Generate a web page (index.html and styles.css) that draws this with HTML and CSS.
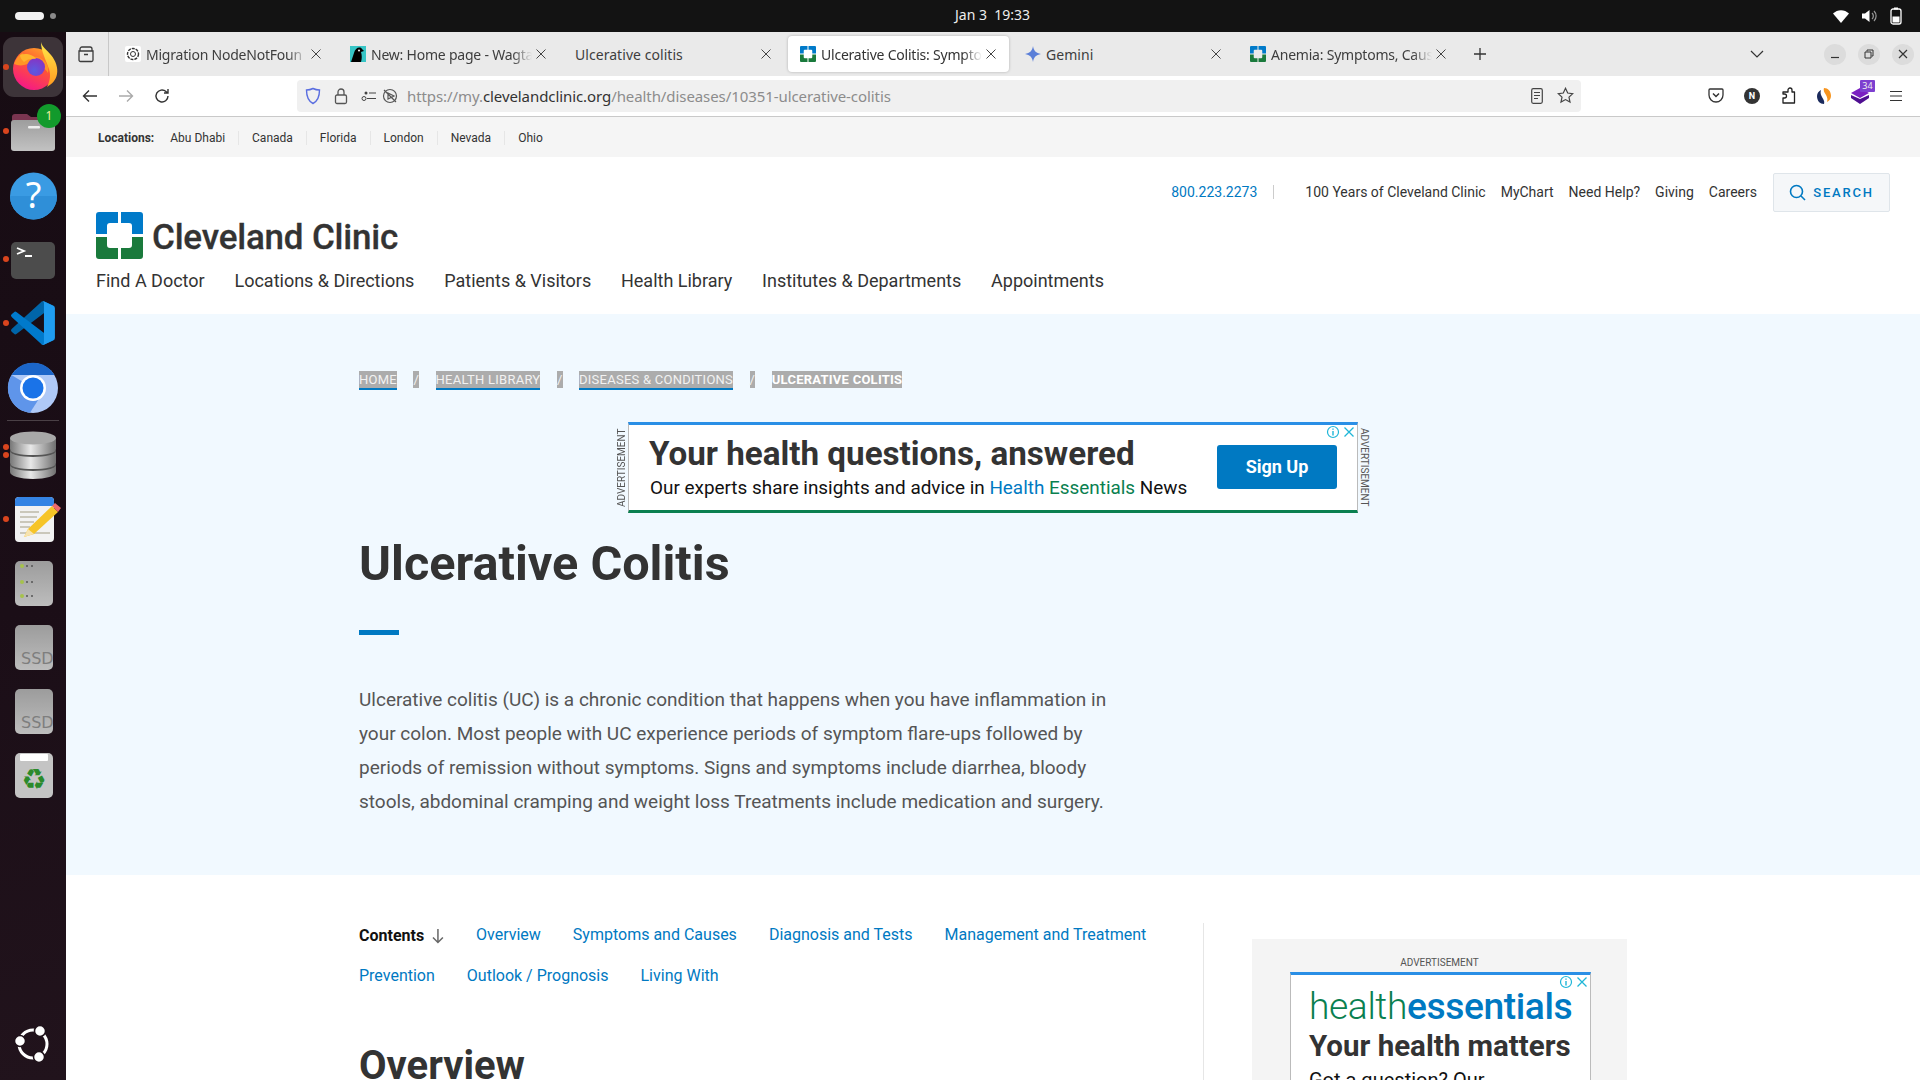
FILE: index.html
```html
<!DOCTYPE html>
<html lang="en">
<head>
<meta charset="utf-8">
<title>Ulcerative Colitis: Symptoms</title>
<link rel="stylesheet" href="styles.css">
</head>
<body>
<svg class="defs" width="0" height="0"><defs>
  <g id="cc"><path id="ccq" d="M3 0H22V11H14a3 3 0 0 0-3 3V22H0V3a3 3 0 0 1 3-3z" fill="#007ac9"/><use href="#ccq" transform="translate(47 0) scale(-1 1)"/><path id="ccg" d="M3 47H22V36H14a3 3 0 0 1-3-3V25H0V44a3 3 0 0 0 3 3z" fill="#1a7a3c"/><use href="#ccg" transform="translate(47 0) scale(-1 1)"/></g>
  <g id="tabx"><path d="M2.500 2.500l9 9M11.500 2.500l-9 9" fill="none" stroke="#444" stroke-width="1"/></g>
  <linearGradient id="gr" x1="0" y1="0" x2="0" y2="1"><stop offset="0" stop-color="#9c9c9c"/><stop offset="1" stop-color="#bdbdbd"/></linearGradient>
</defs></svg>
<div class="desktop">
  <header class="topbar">
    <div class="activities"><span class="pill"></span><span class="pill-dot"></span></div>
    <div class="clock">Jan 3&nbsp;&nbsp;19:33</div>
    <div class="tray">
      <svg width="18" height="16" viewBox="0 0 18 16"><path d="M1 5.500C5.500 1 12.500 1 17 5.500L9 15z" fill="#fff"/></svg>
      <svg width="18" height="16" viewBox="0 0 18 16"><path d="M1 5.500h3L8.500 2v12L4 10.500H1z" fill="#fff"/><path d="M11 5a4 4 0 0 1 0 6M13 3a7 7 0 0 1 0 10" fill="none" stroke="#999" stroke-width="1.200"/></svg>
      <svg width="12" height="18" viewBox="0 0 12 18"><rect x="4" y="0.500" width="4" height="2" fill="#fff"/><rect x="1" y="2" width="10" height="15" rx="2" fill="none" stroke="#fff" stroke-width="1.300"/><rect x="2.500" y="9.500" width="7" height="6" fill="#fff"/></svg>
    </div>
  </header>
  <div class="workspace">
    <nav class="dock">
      <div class="dock-item active"><i class="run"></i>
        <svg width="64" height="64" viewBox="0 0 64 64"><defs><linearGradient id="ff1" x1="0.800" y1="0" x2="0.300" y2="1"><stop offset="0" stop-color="#ffa526"/><stop offset=".45" stop-color="#ff5436"/><stop offset="1" stop-color="#f5168a"/></linearGradient><linearGradient id="ff2" x1="0.500" y1="0" x2="0.500" y2="1"><stop offset="0" stop-color="#ffe94a"/><stop offset="1" stop-color="#ff9a1f"/></linearGradient><radialGradient id="ff3" cx=".4" cy=".7" r=".8"><stop offset="0" stop-color="#5b5be0"/><stop offset="1" stop-color="#8c2fc0"/></radialGradient></defs><circle cx="33" cy="34" r="21" fill="url(#ff1)"/><path d="M40 7c1 5 6 8 10 13 5 6 7 13 6 19-1 6-5 10-10 13 3-6 4-12 2-18C45 25 40 16 40 7z" fill="url(#ff2)"/><path d="M13 29c2-6 5-9 9-11-1 3 0 4 2 5 5-2 12-2 17 1 5 3 7 8 6 14-5-8-14-11-24-8-4 1-7 0-10-1z" fill="#ff9426"/><circle cx="35" cy="32" r="9" fill="url(#ff3)"/><path d="M19 20c5-2 13-1 16 4-4-1-9 0-12 3-2-2-4-4-4-7z" fill="#ffb52e"/></svg>
      </div>
      <div class="dock-item"><i class="run"></i>
        <svg width="64" height="64" viewBox="0 0 64 64"><defs><linearGradient id="fo" x1="0" y1="0" x2="0" y2="1"><stop offset="0" stop-color="#9d9d9d"/><stop offset="1" stop-color="#c2c2c2"/></linearGradient></defs><path d="M11 28v-10a3 3 0 0 1 3-3h12l4 3h18v10z" fill="#7a3550"/><rect x="10" y="21" width="44" height="31" rx="3" fill="url(#fo)"/><rect x="27" y="27" width="12" height="2.500" rx="1" fill="#eee"/></svg>
        <span class="badge">1</span>
      </div>
      <div class="dock-item">
        <svg width="64" height="64" viewBox="0 0 64 64"><circle cx="32.500" cy="33" r="23.500" fill="#3a9be3"/><path d="M9 33a23.500 23.500 0 0 0 47 0z" fill="#2f8fd8"/><text x="32.500" y="45" class="help-mark">?</text></svg>
      </div>
      <div class="dock-item"><i class="run"></i>
        <svg width="64" height="64" viewBox="0 0 64 64"><rect x="10" y="15" width="44" height="37" rx="5" fill="#4c4c4c"/><path d="M16 21l7 3-7 3M24 29h7" fill="none" stroke="#fff" stroke-width="1.800"/></svg>
      </div>
      <div class="dock-item"><i class="run"></i>
        <svg width="64" height="64" viewBox="-23 -21 146 142"><path d="M96.460 10.800L75.860.87a6.230 6.230 0 0 0-7.110 1.210L1.300 63.580a4.170 4.170 0 0 0 0 6.160l5.510 5.010a4.170 4.170 0 0 0 5.320.24L93.340 13.370a4.130 4.130 0 0 1 6.660 3.290v-.24a6.250 6.250 0 0 0-3.540-5.620z" fill="#0065a9"/><path d="M96.460 89.200L75.860 99.130a6.230 6.230 0 0 1-7.110-1.210L1.300 36.420a4.170 4.170 0 0 1 0-6.160l5.510-5.010a4.170 4.170 0 0 1 5.320-.24l81.210 61.620a4.130 4.130 0 0 0 6.660-3.290v.24a6.250 6.250 0 0 1-3.540 5.620z" fill="#007acc"/><path d="M75.860 99.130a6.230 6.230 0 0 1-7.110-1.210c2.310 2.310 6.250.67 6.250-2.590V4.670c0-3.260-3.940-4.890-6.250-2.590a6.230 6.230 0 0 1 7.110-1.210l20.600 9.910A6.250 6.250 0 0 1 100 16.400v67.200a6.250 6.250 0 0 1-3.540 5.620z" fill="#1f9cf0"/></svg>
      </div>
      <div class="dock-item">
        <svg width="64" height="64" viewBox="0 0 64 64"><circle cx="32" cy="33" r="25" fill="#afc9f7"/><path d="M10.500 20a25 25 0 0 1 43 0H32z" fill="#1c66c9"/><path d="M10.500 20a25 25 0 0 0 18.500 37.800L41 39 32 33z" fill="#5f95ea"/><circle cx="32" cy="33" r="13" fill="#fff"/><circle cx="32" cy="33" r="10.500" fill="#1a73e8"/></svg>
      </div>
      <div class="dock-sep"></div>
      <div class="dock-item"><i class="run two"></i>
        <svg width="64" height="64" viewBox="0 0 64 64"><defs><linearGradient id="db" x1="0" y1="0" x2="1" y2="0"><stop offset="0" stop-color="#777"/><stop offset=".45" stop-color="#e8e8e8"/><stop offset="1" stop-color="#6f6f6f"/></linearGradient></defs><path d="M9 42h46v7c0 4-10 7-23 7S9 53 9 49z" fill="url(#db)"/><ellipse cx="32" cy="42" rx="23" ry="6" fill="#555"/><path d="M9 28h46v12c0 4-10 6-23 6S9 44 9 40z" fill="url(#db)"/><ellipse cx="32" cy="28" rx="23" ry="6" fill="#555"/><path d="M9 15h46v11c0 4-10 6-23 6S9 30 9 26z" fill="url(#db)"/><ellipse cx="32" cy="15" rx="23" ry="6.500" fill="#a8a8a8"/></svg>
      </div>
      <div class="dock-item"><i class="run"></i>
        <svg width="64" height="64" viewBox="0 0 64 64"><rect x="14" y="10" width="39" height="45" rx="4" fill="#f2f2f2"/><path d="M14 19v-5a4 4 0 0 1 4-4h31a4 4 0 0 1 4 4v5z" fill="#3584e4"/><path d="M19 25h19M19 30h17M19 35h14M19 40h10M19 46h30" stroke="#bdb9a8" stroke-width="1.500"/><path d="M23 50l4-8 24-23 6 6-24 22z" fill="#f6c427"/><path d="M51 19l3-3 6 5-3 4z" fill="#ed6a6a"/><path d="M23 50l4-8 6 5z" fill="#f7e3b0"/></svg>
      </div>
      <div class="dock-item">
        <svg width="64" height="64" viewBox="0 0 64 64"><rect x="14" y="10" width="38" height="45" rx="5" fill="url(#gr)"/><g fill="#555"><circle cx="21" cy="15" r="2" fill="#a6c24c"/><circle cx="26" cy="15" r="1"/><circle cx="31" cy="15" r="1"/><circle cx="21" cy="31" r="2" fill="#a6c24c"/><circle cx="26" cy="31" r="1"/><circle cx="31" cy="31" r="1"/><circle cx="21" cy="45" r="2" fill="#a6c24c"/><circle cx="26" cy="45" r="1"/><circle cx="31" cy="45" r="1"/></g></svg>
      </div>
      <div class="dock-item">
        <svg width="64" height="64" viewBox="0 0 64 64"><rect x="14" y="10" width="38" height="45" rx="5" fill="url(#gr)"/><text x="20" y="49" class="ssd">SSD</text></svg>
      </div>
      <div class="dock-item">
        <svg width="64" height="64" viewBox="0 0 64 64"><rect x="14" y="10" width="38" height="45" rx="5" fill="url(#gr)"/><text x="20" y="49" class="ssd">SSD</text></svg>
      </div>
      <div class="dock-item">
        <svg width="64" height="64" viewBox="0 0 64 64"><rect x="14" y="10" width="38" height="45" rx="5" fill="#c4c4c4"/><rect x="19" y="11" width="28" height="7" rx="1" fill="#fff"/><text x="33" y="46" class="recycle">♻</text></svg>
      </div>
      <div class="dock-ubuntu">
        <svg width="40" height="40" viewBox="0 0 40 40"><circle cx="20" cy="20" r="14" fill="none" stroke="#fff" stroke-width="3"/><circle cx="7" cy="17" r="5.500" fill="#fff" stroke="#1e1119" stroke-width="1.500"/><circle cx="27" cy="7" r="5.500" fill="#fff" stroke="#1e1119" stroke-width="1.500"/><circle cx="26" cy="33" r="5.500" fill="#fff" stroke="#1e1119" stroke-width="1.500"/></svg>
      </div>
    </nav>
    <div class="browser">
      <div class="tabbar">
        <div class="tab-side"><svg width="18" height="18" viewBox="0 0 18 18"><path d="M3 6V4a2 2 0 0 1 2-2h8a2 2 0 0 1 2 2v2M2 6h14v9a1.500 1.500 0 0 1-1.500 1.500h-11A1.500 1.500 0 0 1 2 15zM7 9.500h4" fill="none" stroke="#3b3b3b" stroke-width="1.300"/></svg></div>
        <div class="tabs">
          <div class="tab"><svg class="fav" width="16" height="16" viewBox="0 0 16 16"><rect width="16" height="16" rx="2" fill="#fff"/><circle cx="8" cy="8" r="5.500" fill="none" stroke="#333" stroke-width="1.400" stroke-dasharray="3 1"/><circle cx="8" cy="8" r="2.500" fill="none" stroke="#333"/></svg><span class="tab-title fade">Migration NodeNotFoun</span><svg class="x" width="14" height="14" viewBox="0 0 14 14"><use href="#tabx"/></svg></div>
          <div class="tab"><svg class="fav" width="16" height="16" viewBox="0 0 16 16"><rect width="16" height="16" fill="#37c5c6"/><path d="M1 16l3-9c1-5 6-7 8-4l2 2-3 1c1 3 1 7 0 10z" fill="#000"/><circle cx="9" cy="4.500" r="1" fill="#fff"/></svg><span class="tab-title fade">New: Home page - Wagta</span><svg class="x" width="14" height="14" viewBox="0 0 14 14"><use href="#tabx"/></svg></div>
          <div class="tab"><span class="tab-title">Ulcerative colitis</span><svg class="x" width="14" height="14" viewBox="0 0 14 14"><use href="#tabx"/></svg></div>
          <div class="tab current"><svg class="fav" width="16" height="16" viewBox="0 0 47 47"><use href="#cc"/></svg><span class="tab-title fade">Ulcerative Colitis: Sympto</span><svg class="x" width="14" height="14" viewBox="0 0 14 14"><use href="#tabx"/></svg></div>
          <div class="tab"><svg class="fav" width="16" height="16" viewBox="0 0 16 16"><path d="M8 0c.6 4.500 3 7.200 8 8-5 .8-7.400 3.500-8 8-.6-4.500-3-7.200-8-8 5-.8 7.400-3.500 8-8z" fill="#5b7fd8"/></svg><span class="tab-title">Gemini</span><svg class="x" width="14" height="14" viewBox="0 0 14 14"><use href="#tabx"/></svg></div>
          <div class="tab"><svg class="fav" width="16" height="16" viewBox="0 0 47 47"><use href="#cc"/></svg><span class="tab-title fade">Anemia: Symptoms, Caus</span><svg class="x" width="14" height="14" viewBox="0 0 14 14"><use href="#tabx"/></svg></div>
        </div>
        <div class="newtab"><svg width="14" height="14" viewBox="0 0 14 14"><path d="M7 1v12M1 7h12" stroke="#333" stroke-width="1.300"/></svg></div>
        <div class="tab-list"><svg width="14" height="8" viewBox="0 0 14 8"><path d="M1 1l6 6 6-6" fill="none" stroke="#333" stroke-width="1.200"/></svg></div>
        <div class="win-btns">
          <span class="win"><svg width="10" height="10" viewBox="0 0 10 10"><path d="M1 8.500h8" stroke="#333" stroke-width="1.200"/></svg></span>
          <span class="win"><svg width="10" height="10" viewBox="0 0 10 10"><path d="M3 2.500V1h6v6H7.500M1 3h6v6H1z" fill="none" stroke="#333"/></svg></span>
          <span class="win"><svg width="10" height="10" viewBox="0 0 10 10"><path d="M1 1l8 8M9 1l-8 8" stroke="#333" stroke-width="1.200"/></svg></span>
        </div>
      </div>
      <div class="toolbar">
        <span class="tbtn"><svg width="16" height="14" viewBox="0 0 16 14"><path d="M15 7H1.500M7 1.500L1.500 7 7 12.500" fill="none" stroke="#333" stroke-width="1.400"/></svg></span>
        <span class="tbtn"><svg width="16" height="14" viewBox="0 0 16 14"><path d="M1 7h13.500M9 1.500L14.500 7 9 12.500" fill="none" stroke="#aaa" stroke-width="1.400"/></svg></span>
        <span class="tbtn"><svg width="16" height="16" viewBox="0 0 16 16"><path d="M14 8a6 6 0 1 1-2-4.500L14 5M14 1v4h-4" fill="none" stroke="#333" stroke-width="1.400"/></svg></span>
        <div class="urlbar">
          <span class="ubtn"><svg width="16" height="18" viewBox="0 0 16 18"><path d="M8 1.500c2 1 4 1.500 6.500 1.500 0 6-1.500 11-6.500 13.500C3 14 1.500 9 1.500 3 4 3 6 2.500 8 1.500z" fill="none" stroke="#5a6ee0" stroke-width="1.400"/></svg></span>
          <span class="ubtn"><svg width="14" height="18" viewBox="0 0 14 18"><path d="M4 8V5a3 3 0 0 1 6 0v3" fill="none" stroke="#555" stroke-width="1.300"/><rect x="1.500" y="8" width="11" height="8.500" rx="1.500" fill="none" stroke="#555" stroke-width="1.300"/></svg></span>
          <span class="ubtn perm"><svg width="16" height="12" viewBox="0 0 16 12"><circle cx="3" cy="8.500" r="2" fill="none" stroke="#444"/><path d="M6 8.500h9M8 3h7" stroke="#444" stroke-width="1.200"/><circle cx="5" cy="3" r="1.500" fill="#444"/></svg></span>
          <span class="ubtn play"><svg width="16" height="16" viewBox="0 0 16 16"><circle cx="8" cy="8" r="6.500" fill="none" stroke="#555" stroke-width="1.200"/><path d="M6 5l6 3-6 3zM2 2l12 12" fill="none" stroke="#555" stroke-width="1.200"/></svg></span>
          <div class="url"><span class="dim">https://my.</span>clevelandclinic.org<span class="dim">/health/diseases/10351-ulcerative-colitis</span></div>
          <span class="ubtn"><svg width="12" height="16" viewBox="0 0 12 16"><rect x="0.700" y="0.700" width="10.600" height="14.600" rx="1.500" fill="none" stroke="#444" stroke-width="1.200"/><path d="M3 4.500h6M3 7.500h6M3 10.500h4" stroke="#444"/></svg></span>
          <span class="ubtn"><svg width="17" height="17" viewBox="0 0 17 17"><path d="M8.500 1.300l2.200 4.700 5 .6-3.700 3.500 1 5-4.500-2.500-4.500 2.500 1-5L1.300 6.600l5-.6z" fill="none" stroke="#444" stroke-width="1.200"/></svg></span>
        </div>
        <div class="extensions">
          <span class="tbtn"><svg width="16" height="15" viewBox="0 0 16 15"><path d="M2 1h12a1 1 0 0 1 1 1v5a7 7 0 0 1-14 0V2a1 1 0 0 1 1-1z" fill="none" stroke="#333" stroke-width="1.300"/><path d="M5 5.500l3 3 3-3" fill="none" stroke="#333" stroke-width="1.500"/></svg></span>
          <span class="tbtn"><span class="n-ext">N</span></span>
          <span class="tbtn"><svg width="15" height="17" viewBox="0 0 15 17"><path d="M2 16v-5h1.500a2 2 0 1 0 0-4H2V5h5V3a2 2 0 1 1 4 0v2h2.500v11z" fill="none" stroke="#222" stroke-width="1.300" stroke-linejoin="round"/></svg></span>
          <span class="tbtn"><svg width="16" height="18" viewBox="0 0 16 18"><path d="M8 1c4 0 7 3 7 8 0 3-2 5-4 6 1-3 0-5-1-7-1-2-3-4-2-7z" fill="#f7941e"/><path d="M8 17c-4 0-7-3-7-8 0-3 2-5 4-6-1 3 0 5 1 7 1 2 3 4 2 7z" fill="#1b2a5c"/></svg></span>
          <span class="tbtn"><svg width="18" height="16" viewBox="0 0 18 16"><path d="M9 0l9 5-9 5-9-5z" fill="#7a1fc2"/><path d="M0 7l9 4 9-4v3l-9 6-9-6z" fill="#4f0e91"/></svg><span class="count">34</span></span>
          <span class="tbtn"><svg width="14" height="12" viewBox="0 0 14 12"><path d="M1 1.500h12M1 6h12M1 10.500h12" stroke="#333" stroke-width="1.200"/></svg></span>
        </div>
      </div>
      <main class="page">
        <div class="locations">
          <b class="loc-label">Locations:</b>
          <a>Abu Dhabi</a><a>Canada</a><a>Florida</a><a>London</a><a>Nevada</a><a>Ohio</a>
        </div>
        <div class="site-header">
          <div class="util">
            <a class="phone">800.223.2273</a>
            <a>100 Years of Cleveland Clinic</a><a>MyChart</a><a>Need Help?</a><a>Giving</a><a>Careers</a>
            <span class="search"><svg width="17" height="17" viewBox="0 0 17 17"><circle cx="7.500" cy="7.500" r="6" fill="none" stroke="#0079c2" stroke-width="1.600"/><path d="M12 12l4 4" stroke="#0079c2" stroke-width="1.600"/></svg>SEARCH</span>
          </div>
          <div class="logo">
            <svg width="47" height="47" viewBox="0 0 47 47"><use href="#cc"/></svg>
            <span class="logo-text">Cleveland Clinic</span>
          </div>
          <nav class="mainnav"><a>Find A Doctor</a><a>Locations &amp; Directions</a><a>Patients &amp; Visitors</a><a>Health Library</a><a>Institutes &amp; Departments</a><a>Appointments</a></nav>
        </div>
        <section class="hero">
          <div class="crumbs">
            <a class="crumb link">HOME</a><span class="crumb">/</span><a class="crumb link">HEALTH LIBRARY</a><span class="crumb">/</span><a class="crumb link">DISEASES &amp; CONDITIONS</a><span class="crumb">/</span><span class="crumb now">ULCERATIVE COLITIS</span>
          </div>
          <div class="ad-row">
            <span class="ad-side left">ADVERTISEMENT</span>
            <div class="ad-banner">
              <div class="ad-copy">
                <div class="ad-head">Your health questions, answered</div>
                <div class="ad-sub">Our experts share insights and advice in <span class="c-blue">Health</span> <span class="c-green">Essentials</span> News</div>
              </div>
              <span class="ad-cta">Sign Up</span>
              <span class="adchoice"><svg width="14" height="14" viewBox="0 0 14 14"><circle cx="7" cy="7" r="5.500" fill="none" stroke="#1fb6d8" stroke-width="1.200"/><path d="M7 6v4.500M7 3.500v1.300" stroke="#1fb6d8" stroke-width="1.400"/></svg><svg width="14" height="14" viewBox="0 0 14 14"><path d="M2.500 2.500l9 9M11.500 2.500l-9 9" stroke="#1fb6d8" stroke-width="1.300"/></svg></span>
            </div>
            <span class="ad-side right">ADVERTISEMENT</span>
          </div>
          <div class="hero-text">
            <h1>Ulcerative Colitis</h1>
            <div class="bar"></div>
            <p>Ulcerative colitis (UC) is a chronic condition that happens when you have inflammation in your colon. Most people with UC experience periods of symptom flare-ups followed by periods of remission without symptoms. Signs and symptoms include diarrhea, bloody stools, abdominal cramping and weight loss Treatments include medication and surgery.</p>
          </div>
        </section>
        <section class="content">
          <div class="article">
            <div class="toc">
              <b class="toc-label">Contents <svg width="12" height="16" viewBox="0 0 12 16"><path d="M6 1v13.500M1 9.500l5 5 5-5" fill="none" stroke="#666" stroke-width="1.500"/></svg></b>
              <a>Overview</a><a>Symptoms and Causes</a><a>Diagnosis and Tests</a><a>Management and Treatment</a><a>Prevention</a><a>Outlook / Prognosis</a><a>Living With</a>
            </div>
            <h2>Overview</h2>
          </div>
          <aside class="side">
            <div class="side-label">ADVERTISEMENT</div>
            <div class="side-ad">
              <span class="adchoice"><svg width="14" height="14" viewBox="0 0 14 14"><circle cx="7" cy="7" r="5.500" fill="none" stroke="#1fb6d8" stroke-width="1.200"/><path d="M7 6v4.500M7 3.500v1.300" stroke="#1fb6d8" stroke-width="1.400"/></svg><svg width="14" height="14" viewBox="0 0 14 14"><path d="M2.500 2.500l9 9M11.500 2.500l-9 9" stroke="#1fb6d8" stroke-width="1.300"/></svg></span>
              <div class="he-logo"><span class="he-health">health</span><span class="he-ess">essentials</span></div>
              <div class="he-head">Your health matters</div>
              <div class="he-sub">Got a question? Our</div>
            </div>
          </aside>
        </section>
      </main>
    </div>
  </div>
</div>
</body>
</html>
```
FILE: styles.css
```css
* { box-sizing: border-box; }
html, body { margin: 0; padding: 0; width: 1920px; height: 1080px; overflow: hidden; }
body { font-family: Roboto, "Liberation Sans", sans-serif; background: #fff; }
a { color: inherit; text-decoration: none; }
.defs { position: absolute; }
.desktop { width: 1920px; height: 1080px; display: flex; flex-direction: column; overflow: hidden; }

/* top bar */
.topbar { height: 32px; flex: none; background: #131313; display: flex; align-items: center; position: relative; color: #fff; }
.activities { display: flex; align-items: center; margin-left: 15px; gap: 6px; }
.pill { width: 29px; height: 8px; border-radius: 4px; background: #f2f2f2; }
.pill-dot { width: 6px; height: 6px; border-radius: 50%; background: #8a8a8a; }
.clock { position: absolute; left: 955px; top: 0; font: 14px/30px "Noto Sans", sans-serif; letter-spacing: 0; color: #eee; }
.tray { margin-left: auto; margin-right: 18px; display: flex; align-items: center; gap: 11px; }

.workspace { flex: 1; display: flex; min-height: 0; }

/* dock */
.dock { width: 66px; flex: none; background: linear-gradient(170deg, #170c13 0%, #1b0e17 55%, #21131c 100%); display: flex; flex-direction: column; padding-top: 3px; align-items: center; }
.dock-item { width: 64px; height: 64px; flex: none; position: relative; }
.dock-item svg { display: block; }
.dock-item.active::before { content: ""; position: absolute; left: 2px; top: 2px; width: 60px; height: 60px; border-radius: 11px; background: #3d3439; }
.dock-item.active svg { position: relative; }
.run { position: absolute; left: 2px; top: 29px; width: 6px; height: 6px; border-radius: 50%; background: #d9451e; z-index: 1; }
.run.two { box-shadow: 0 8px 0 #d9451e; top: 21px; }
.badge { position: absolute; left: 36px; top: 5px; width: 24px; height: 24px; border-radius: 50%; background: #129a2c; color: #f0f0a0; font: 12px/24px "Noto Sans", sans-serif; text-align: center; }
.dock-sep { width: 52px; height: 1px; background: #4a4046; margin: 1px 0 2px; flex: none; }
.dock-ubuntu { margin-top: auto; margin-bottom: 16px; width: 40px; height: 40px; }
.help-mark { font: 400 36px "Noto Sans", sans-serif; fill: #fff; text-anchor: middle; }
.ssd { font: 16px "DejaVu Sans", sans-serif; fill: #7e7e7e; }
.recycle { font: 28px "DejaVu Sans", sans-serif; fill: #2b8a2b; text-anchor: middle; }

/* browser chrome */
.browser { flex: 1; min-width: 0; display: flex; flex-direction: column; }
.tabbar { height: 44px; flex: none; background: #eaeaea; display: flex; align-items: center; }
.tab-side { width: 43px; height: 44px; flex: none; border-right: 1px solid #c8c8c8; display: flex; align-items: center; justify-content: center; padding-right: 3px; }
.tabs { display: flex; gap: 4px; margin-left: 4px; }
.tab { width: 221px; height: 36px; display: flex; align-items: center; padding: 0 11px 0 12px; border-radius: 4px; font: 14px "Noto Sans", sans-serif; letter-spacing: 0.050px; color: #3e3e3e; }
.tab.current { background: #fff; box-shadow: 0 0 3px rgba(0,0,0,.25); color: #333; }
.fav { flex: none; margin-right: 5px; }
.tab-title { flex: 1; min-width: 0; white-space: nowrap; }
.tab-title.fade { letter-spacing: -0.220px; -webkit-mask-image: linear-gradient(to right, #000 88%, transparent); mask-image: linear-gradient(to right, #000 88%, transparent); }
.x { flex: none; margin-left: 2px; }
.newtab { width: 42px; flex: none; display: flex; justify-content: center; }
.tab-list { width: 36px; margin-left: auto; margin-right: 49px; display: flex; justify-content: center; }
.win-btns { display: flex; gap: 12px; margin-right: 6px; }
.win { width: 22px; height: 21px; border-radius: 50%; background: #dcdcdc; display: flex; align-items: center; justify-content: center; }

.toolbar { height: 41px; flex: none; background: #fff; border-bottom: 1px solid #c9c9c9; display: flex; align-items: center; padding-left: 6px; padding-bottom: 1px; }
.tbtn { width: 36px; height: 32px; flex: none; display: flex; align-items: center; justify-content: center; position: relative; }
.urlbar { width: 1284px; height: 32px; flex: none; margin-left: 117px; background: #f0f0f0; border-radius: 4px; display: flex; align-items: center; padding: 0 2px; }
.ubtn { width: 28px; height: 32px; flex: none; display: flex; align-items: center; justify-content: center; }
.ubtn.perm { width: 24px; margin-left: 2px; }
.ubtn.play { width: 18px; }
.url { flex: 1; min-width: 0; margin-left: 8px; font: 15px "Noto Sans", sans-serif; letter-spacing: -0.080px; color: #333; white-space: nowrap; }
.dim { color: #8c8c8c; }
.extensions { display: flex; margin-left: 117px; }
.n-ext { width: 16px; height: 16px; border-radius: 50%; background: #333; color: #fff; font: 700 9px/16px Roboto, sans-serif; text-align: center; }
.count { position: absolute; left: 18px; top: 0; width: 15px; height: 12px; background: #7d3fd0; color: #eee; font: 9px/12px "Noto Sans", sans-serif; text-align: center; border-radius: 1px; }

/* page */
.page { flex: 1; min-height: 0; overflow: hidden; background: #fff; }
.locations { height: 40px; background: #f5f5f5; display: flex; align-items: center; padding: 1px 0 0 32px; font-size: 12px; color: #333; }
.loc-label { margin-right: 16px; }
.locations a { padding-right: 13px; margin-right: 13px; border-right: 1px solid #e6e6e6; line-height: 14px; }
.locations a:last-child { border: 0; }

.site-header { height: 157px; padding: 16px 30px 0; }
.util { display: flex; align-items: center; justify-content: flex-end; height: 39px; font-size: 14px; color: #333; gap: 15px; }
.util a { margin-top: -2px; }
.phone { color: #0079c2; padding-right: 16px; margin-right: 16px; border-right: 1px solid #ccc; line-height: 14px; }
.search { width: 117px; height: 39px; margin-left: 1px; background: #f5f7f9; border: 1px solid #dfe5ea; border-radius: 2px; display: flex; align-items: center; justify-content: center; gap: 7px; color: #0079c2; font-size: 13px; font-weight: 500; letter-spacing: 1.800px; }
.logo { display: flex; align-items: center; height: 47px; gap: 9px; }
.logo svg { display: block; flex: none; }
.logo-text { font-size: 35px; font-weight: 500; color: #333; letter-spacing: -0.200px; line-height: 47px; padding-top: 3px; -webkit-text-stroke: 0.300px #333; }
.mainnav { display: flex; gap: 29.800px; margin-top: 11px; font-size: 18px; line-height: 22px; color: #333; }

.hero { background: #f1f9ff; padding-top: 57px; padding-bottom: 56px; }
.crumbs { display: flex; gap: 16.500px; padding-left: 293px; height: 19px; font-size: 13px; line-height: 17px; letter-spacing: 0.250px; color: #f2f2f2; }
.crumb { background: #acacac; height: 17px; }
.crumb.link { box-shadow: 0 2px 0 #0079c2; }
.crumb.now { font-weight: 700; color: #fff; }
.ad-row { display: flex; justify-content: center; margin-top: 32px; height: 91px; }
.ad-side { width: 12px; font-size: 10px; color: #555; writing-mode: vertical-rl; text-align: center; line-height: 12px; }
.ad-side.left { transform: rotate(180deg); }
.ad-banner { width: 730px; height: 91px; background: #fff; border: 1px solid #bbb; border-top: 3px solid #2a8fe6; border-bottom: 3px solid #0a8050; display: flex; align-items: center; position: relative; padding-left: 20px; }
.ad-copy { flex: none; width: 548px; }
.ad-head { font-size: 33.200px; font-weight: 700; line-height: 42px; color: #333; margin-top: -3px; }
.ad-sub { font-size: 18.900px; line-height: 24px; color: #111; margin: 1px 0 0 1px; }
.c-blue { color: #0079c2; }
.c-green { color: #0a8050; }
.ad-cta { width: 120px; height: 44px; margin: -2px 0 0 20px; background: #0079c2; border-radius: 3px; color: #fff; font-size: 18px; font-weight: 700; line-height: 44px; text-align: center; }
.adchoice { position: absolute; right: 0; top: 0; background: #fff; display: flex; gap: 2px; padding: 0 1px; }
.hero-text { padding-left: 293px; }
h1 { margin: 23px 0 0; font-size: 48.600px; line-height: 56px; font-weight: 700; color: #333; }
.bar { width: 40px; height: 5px; background: #0079c2; margin-top: 38px; }
.hero p { margin: 48px 0 0; width: 760px; font-size: 19px; line-height: 34px; color: #555; }

.content { display: flex; padding: 48px 0 0 293px; }
.article { width: 845px; flex: none; border-right: 1px solid #e6e6e6; height: 300px; }
.toc { display: flex; flex-wrap: wrap; width: 800px; gap: 16px 32px; font-size: 16px; line-height: 24px; color: #0079c2; }
.toc-label { color: #111; width: 85px; display: flex; align-items: center; gap: 8px; white-space: nowrap; font-weight: 700; padding-top: 1px; }
h2 { margin: 54px 0 0; font-size: 40px; line-height: 48px; font-weight: 700; color: #333; }
.side { width: 375px; margin-left: 48px; margin-top: 16px; background: #f4f4f4; height: 300px; padding-top: 18px; }
.side-label { font-size: 10px; line-height: 12px; color: #555; text-align: center; }
.side-ad { position: relative; width: 301px; height: 280px; margin: 3px 0 0 38px; background: #fff; border: 1px solid #bbb; border-top: 3px solid #2a8fe6; padding: 9px 18px; }
.he-logo { font-size: 37.200px; line-height: 44px; white-space: nowrap; letter-spacing: -0.400px; }
.he-health { color: #0a8050; font-weight: 300; }
.he-ess { color: #0079c2; font-weight: 500; }
.he-head { font-size: 29.500px; font-weight: 700; line-height: 36px; color: #333; white-space: nowrap; }
.he-sub { font-size: 20px; line-height: 24px; color: #111; margin-top: 4px; white-space: nowrap; }
```
